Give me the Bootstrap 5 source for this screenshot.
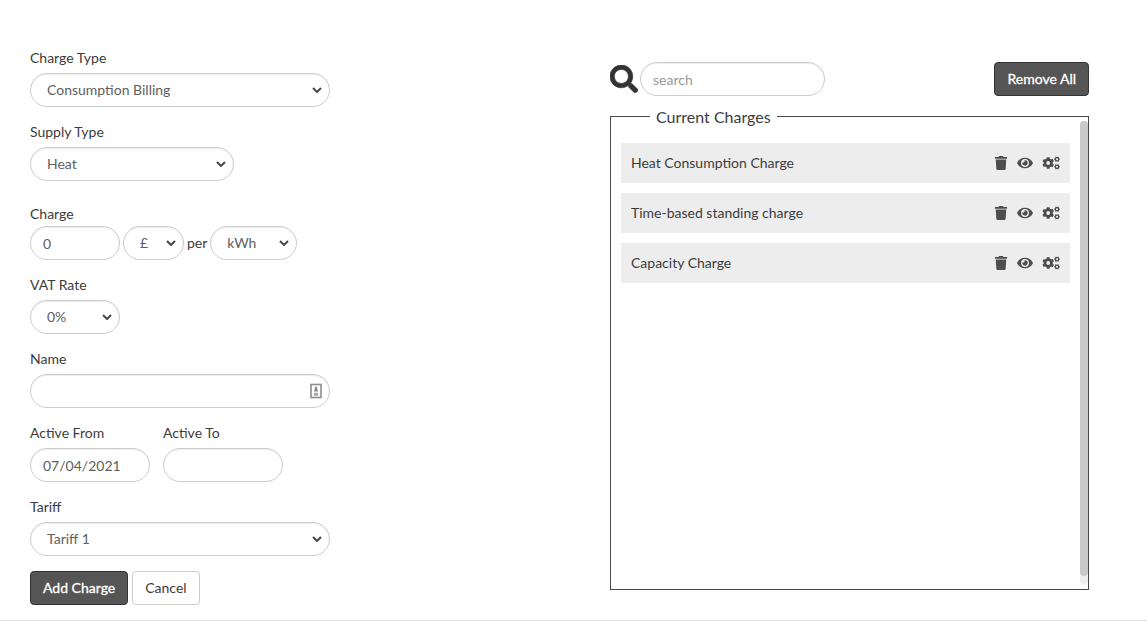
<!DOCTYPE html>
<html lang="en">
<head>
<meta charset="utf-8">
<meta name="viewport" content="width=device-width, initial-scale=1">
<title>Charges</title>
<link href="https://cdn.jsdelivr.net/npm/bootstrap@5.3.0/dist/css/bootstrap.min.css" rel="stylesheet">
<style>
body { font: 14px/20px Lato, sans-serif; color: #3c3c3c; background: #fff; }
.page { padding: 48px 58px 15px 30px; }
.columns { grid-template-columns: 580fr 479fr; }
.w-field { width: 300px; }
.w-supply { width: 204px; }
.w-amount { width: 90px; }
.w-date { width: 120px; }
.w-currency { width: 61px; }
.w-unit { width: 87px; }
.w-search { width: 185px; }
.field { margin-bottom: 15px; }
.field .form-label { display: block; margin-bottom: 5px; line-height: 20px; }
.field.charge { margin-top: 23px; }
.field.charge .form-label { margin-bottom: 2px; }
.form-control, .form-select {
  height: 34px; padding: 6px 12px; font-size: 14px; line-height: 20px; color: #606060;
  border: 1px solid #ccc; border-radius: 17px; box-shadow: inset 0 1px 1px rgba(0,0,0,.075);
}
.form-control::placeholder { color: #999; }
.form-select {
  padding: 6px 24px 6px 16px;
  background: #fff url("data:image/svg+xml,%3Csvg xmlns='http://www.w3.org/2000/svg' viewBox='0 0 10 6'%3E%3Cpath d='M1 1l4 4 4-4' fill='none' stroke='%23484848' stroke-width='2'/%3E%3C/svg%3E") no-repeat right 7px center / 10px 6px;
}
.fill-icon { position: absolute; right: 8px; top: 9px; }
.gap-small { gap: 4px; }
.gap-inline { gap: 3px; }
.gap-dates { gap: 13px; }
.gap-search { gap: 2px; }
.btn { height: 34px; padding: 6px 12px; font-size: 14px; line-height: 20px; border-radius: 4px; white-space: nowrap; }
.btn-main, .btn-main:hover { color: #fff; background: #555; border-color: #333; -webkit-text-stroke: .3px #fff; }
.btn-plain, .btn-plain:hover { color: #3c3c3c; background: #fff; border-color: #ccc; }
.side { padding-top: 14px; }
.charges { height: 486px; margin-top: 8px; padding: 0 18px 0 10px; border: 1px solid #484848; }
.charges legend { float: none; width: auto; margin: 0 0 15px 29px; padding: 2px 6px 0; font-size: 16px; line-height: 22px; }
.charge-row { height: 40px; margin-bottom: 10px; padding: 0 10px; background: #ededed; }
.icon-btn { display: flex; padding: 0; border: 0; background: none; color: #4d4d4d; }
.scroll-track { position: absolute; top: -22px; bottom: 4px; right: 0; width: 8px; border-radius: 4px; background: #eee; }
.scroll-thumb { height: 98%; border-radius: 4px; background: #c9c9c9; }
.rule { margin: 0; border-color: #ccc; opacity: .6; }
</style>
</head>
<body>
<svg width="0" height="0" class="position-absolute" aria-hidden="true">
  <symbol id="trash" viewBox="0 0 448 512"><path fill="currentColor" d="M432 32H312l-9.4-18.7A24 24 0 0 0 281.1 0H166.8a23.72 23.72 0 0 0-21.4 13.3L136 32H16A16 16 0 0 0 0 48v32a16 16 0 0 0 16 16h416a16 16 0 0 0 16-16V48a16 16 0 0 0-16-16zM32 128l21.2 339a48 48 0 0 0 47.9 45h245.8a48 48 0 0 0 47.9-45L416 128z"/></symbol>
  <symbol id="eye" viewBox="0 0 576 512"><path fill="currentColor" d="M572.52 241.4C518.29 135.59 410.93 64 288 64S57.68 135.64 3.48 241.41a32.35 32.35 0 0 0 0 29.19C57.71 376.41 165.07 448 288 448s230.32-71.64 284.52-177.41a32.35 32.35 0 0 0 0-29.19zM288 400a144 144 0 1 1 144-144 143.93 143.93 0 0 1-144 144zm0-240a95.31 95.31 0 0 0-25.31 3.79 47.85 47.85 0 0 1-66.9 66.9A95.78 95.78 0 1 0 288 160z"/></symbol>
  <symbol id="cogs" viewBox="0 0 18 14">
    <g fill="none" stroke="currentColor">
      <circle cx="6.2" cy="7" r="3.3" stroke-width="2.8"/>
      <path stroke-width="2.8" d="M6.2 1.2v2M6.2 10.8v2M1.1 4.1l1.7 1M9.6 9l1.7 1M1.1 9.9l1.7-1M9.6 5l1.7-1"/>
      <circle cx="15" cy="3.2" r="1.7" stroke-width="1.3"/>
      <circle cx="15" cy="10.8" r="1.7" stroke-width="1.3"/>
      <path stroke-width="1" d="M13.6.8l.5.8M16.4.8l-.5.8M13.6 5.6l.5-.8M16.4 5.6l-.5-.8M12.2 3.2h.8M17 3.2h.8M13.6 8.4l.5.8M16.4 8.4l-.5.8M13.6 13.2l.5-.8M16.4 13.2l-.5-.8M12.2 10.8h.8M17 10.8h.8"/>
    </g>
  </symbol>
</svg>
<main class="page d-grid columns">
  <form>
    <div class="field"><label class="form-label" for="type">Charge Type</label>
      <select class="form-select w-field" id="type"><option>Consumption Billing</option></select></div>
    <div class="field"><label class="form-label" for="supply">Supply Type</label>
      <select class="form-select w-supply" id="supply"><option>Heat</option></select></div>
    <div class="field charge"><label class="form-label" for="amount">Charge</label>
      <div class="d-flex align-items-center gap-inline">
        <input class="form-control w-amount" id="amount" value="0">
        <select class="form-select w-currency" aria-label="Currency"><option>£</option></select>
        <label for="unit">per</label>
        <select class="form-select w-unit" id="unit"><option>kWh</option></select>
      </div></div>
    <div class="field"><label class="form-label" for="vat">VAT Rate</label>
      <select class="form-select w-amount" id="vat"><option>0%</option></select></div>
    <div class="field"><label class="form-label" for="name">Name</label>
      <div class="position-relative w-field">
        <input class="form-control" id="name">
        <svg class="fill-icon" width="12" height="16" viewBox="0 0 12 16" aria-hidden="true"><rect x="1" y="1.5" width="10" height="13" fill="#fff" stroke="#8c8c8c" stroke-width="1.6"/><circle cx="6" cy="4.8" r="1.2" fill="#888"/><path fill="#888" d="M5.2 5h1.6l1.4 3.4H3.8z"/><path stroke="#aaa" stroke-width="1.4" d="M3.8 10.5h4.4M3.8 12h4.4"/></svg>
      </div></div>
    <div class="field d-flex gap-dates">
      <div><label class="form-label" for="from">Active From</label><input class="form-control w-date" id="from" value="07/04/2021"></div>
      <div><label class="form-label" for="to">Active To</label><input class="form-control w-date" id="to"></div>
    </div>
    <div class="field"><label class="form-label" for="tariff">Tariff</label>
      <select class="form-select w-field" id="tariff"><option>Tariff 1</option></select></div>
    <div class="d-flex gap-small">
      <button type="button" class="btn btn-main">Add Charge</button>
      <button type="button" class="btn btn-plain">Cancel</button>
    </div>
  </form>
  <section class="side">
    <div class="d-flex align-items-center gap-search">
      <label for="search" class="d-flex" aria-label="Search"><svg width="28" height="28" viewBox="0 0 512 512" aria-hidden="true"><path fill="#333" stroke="#333" stroke-width="12" d="M505 442.7L405.3 343c-4.5-4.5-10.6-7-17-7H372c27.6-35.3 44-79.7 44-128C416 93.1 322.9 0 208 0S0 93.1 0 208s93.1 208 208 208c48.3 0 92.7-16.4 128-44v16.3c0 6.4 2.5 12.5 7 17l99.7 99.7c9.4 9.4 24.6 9.4 33.9 0l28.3-28.3c9.4-9.4 9.4-24.6.1-34zM208 336c-70.7 0-128-57.2-128-128 0-70.7 57.2-128 128-128 70.7 0 128 57.2 128 128 0 70.7-57.2 128-128 128z"/></svg></label>
      <input class="form-control w-search" id="search" placeholder="search">
      <button type="button" class="btn btn-main ms-auto">Remove All</button>
    </div>
    <fieldset class="charges position-relative">
      <legend>Current Charges</legend>
      <div class="charge-row d-flex align-items-center"><span class="me-auto">Heat Consumption Charge</span>
        <div class="d-flex align-items-center gap-2">
          <button type="button" class="icon-btn" aria-label="Delete"><svg width="14" height="14"><use href="#trash"/></svg></button>
          <button type="button" class="icon-btn" aria-label="View"><svg width="18" height="14"><use href="#eye"/></svg></button>
          <button type="button" class="icon-btn" aria-label="Settings"><svg width="18" height="14"><use href="#cogs"/></svg></button>
        </div></div>
      <div class="charge-row d-flex align-items-center"><span class="me-auto">Time-based standing charge</span>
        <div class="d-flex align-items-center gap-2">
          <button type="button" class="icon-btn" aria-label="Delete"><svg width="14" height="14"><use href="#trash"/></svg></button>
          <button type="button" class="icon-btn" aria-label="View"><svg width="18" height="14"><use href="#eye"/></svg></button>
          <button type="button" class="icon-btn" aria-label="Settings"><svg width="18" height="14"><use href="#cogs"/></svg></button>
        </div></div>
      <div class="charge-row d-flex align-items-center"><span class="me-auto">Capacity Charge</span>
        <div class="d-flex align-items-center gap-2">
          <button type="button" class="icon-btn" aria-label="Delete"><svg width="14" height="14"><use href="#trash"/></svg></button>
          <button type="button" class="icon-btn" aria-label="View"><svg width="18" height="14"><use href="#eye"/></svg></button>
          <button type="button" class="icon-btn" aria-label="Settings"><svg width="18" height="14"><use href="#cogs"/></svg></button>
        </div></div>
      <div class="scroll-track"><div class="scroll-thumb"></div></div>
    </fieldset>
  </section>
</main>
<hr class="rule">
<script src="https://cdn.jsdelivr.net/npm/bootstrap@5.3.0/dist/js/bootstrap.bundle.min.js"></script>
</body>
</html>
